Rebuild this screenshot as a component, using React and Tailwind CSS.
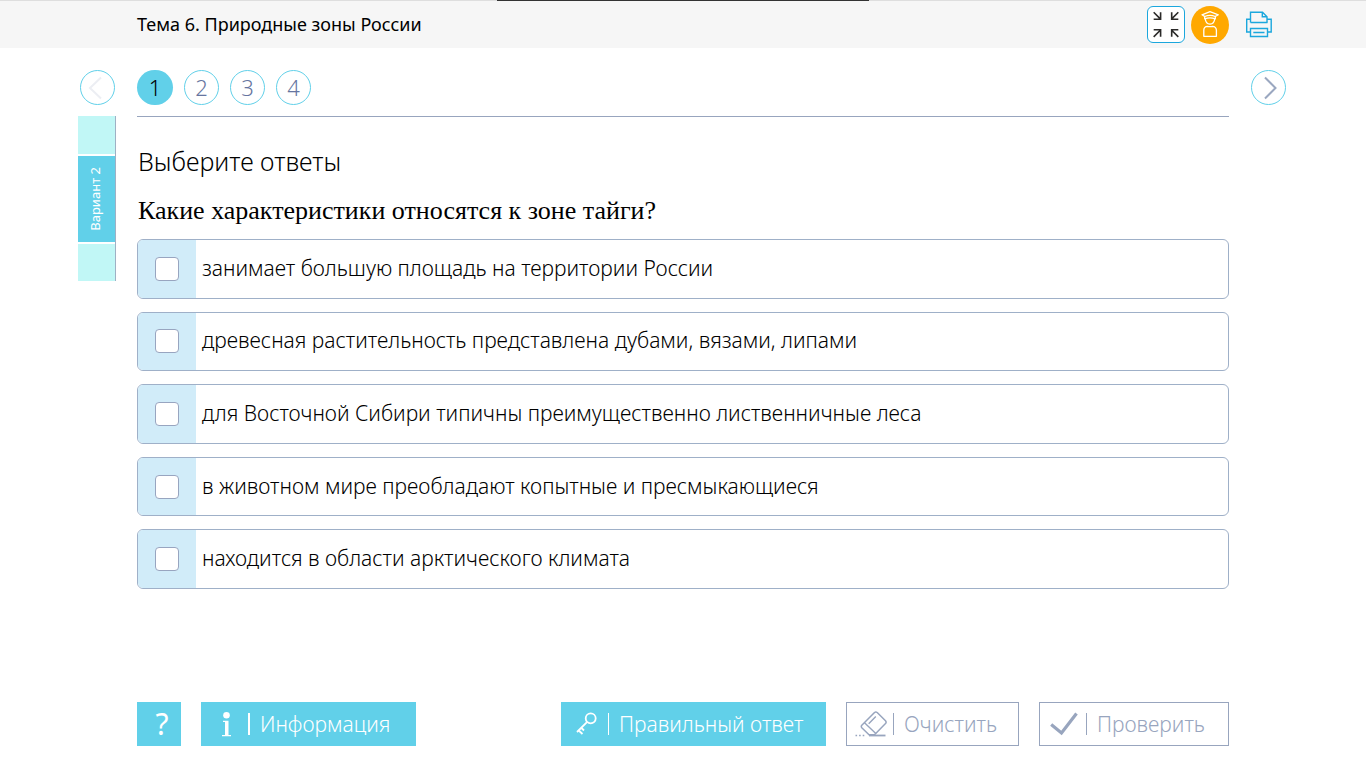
import React, { useState } from "react";

const answers = [
  "занимает большую площадь на территории России",
  "древесная растительность представлена дубами, вязами, липами",
  "для Восточной Сибири типичны преимущественно лиственничные леса",
  "в животном мире преобладают копытные и пресмыкающиеся",
  "находится в области арктического климата",
];

function CollapseIcon() {
  return (
    <svg viewBox="0 0 38 38" className="size-[38px]" fill="none" stroke="#2b2a29" strokeWidth="1.700" aria-hidden="true">
      <path d="M6 5.500L13 12.500M6 13H13.300V5.500" />
      <path d="M32 5.500L25 12.500M25 5.500V13H32" />
      <path d="M6 31.500L13 24.500M6 24H13.300V31.500" />
      <path d="M32 31.500L25 24.500M25 31.500V24H32" />
    </svg>
  );
}

function StudentIcon() {
  return (
    <svg viewBox="0 0 38 38" className="size-[38px]" fill="none" stroke="#fff" strokeWidth="1.300" strokeLinejoin="round" strokeLinecap="round" aria-hidden="true">
      <path d="M11 8.800L19 5.700L27.300 8.800L24.300 10.500Q19 8.300 13.700 10.500Z" />
      <path d="M13.700 10.500V12.800Q19 10.800 24.300 12.800V10.500" />
      <path d="M14.300 13Q14.800 18 19 18.200Q23.200 18 23.700 13" />
      <path d="M12.800 30.300V24Q13 20.500 16.500 20.300Q19 21 21.500 20.300Q25 20.500 25.400 24V30.300Z" />
    </svg>
  );
}

function PrinterIcon() {
  return (
    <svg viewBox="0 0 28 28" className="size-7" fill="none" stroke="#1ba7dd" strokeWidth="1.400" aria-hidden="true">
      <path d="M5.500 11.500V1.200H17.500L22 5.700V11.500M17.300 1.200V5.800H22" />
      <path d="M5.500 8.200H1.700V21H5.500M22 8.200H26.200V21H22.500" />
      <path d="M5.500 11.500H22.500M5.500 17.500H22.500V25.500H5.500ZM8.300 21.500H19.500" />
    </svg>
  );
}

function KeyIcon() {
  return (
    <svg viewBox="0 0 24 24" className="size-6" fill="none" stroke="#fff" strokeWidth="1.800" aria-hidden="true">
      <circle cx="15.700" cy="6.300" r="5" />
      <path d="M12.200 9.800L2 20M3.200 18L7.500 22M6 15.500L9 18.500" />
    </svg>
  );
}

function InfoIcon() {
  return (
    <svg viewBox="0 0 12 26" className="h-[26px] w-3" fill="#fff" aria-hidden="true">
      <circle cx="5.500" cy="4.300" r="3.300" />
      <path d="M2 9.700H7.500V24H10V25.300H1V24H4V11H2Z" />
    </svg>
  );
}

function EraserIcon() {
  return (
    <svg viewBox="0 0 32 28" className="h-7 w-8" fill="none" stroke="#98a5be" strokeWidth="1.500" strokeLinejoin="round" aria-hidden="true">
      <path d="M6.800 15.300L19.500 2.500Q20.800 1.500 22.200 2.500L30.500 10.800Q31.700 12.200 30.500 13.500L19.500 24.800H14L6.800 17.800Q5.800 16.500 6.800 15.300Z" />
      <path d="M9.500 12.700L20.800 23.500M13.700 13.800L20.800 6.500" strokeWidth="1.400" />
      <path d="M14 25.500H30.500" strokeWidth="1.800" />
      <path d="M0.500 25.500H10" strokeWidth="1.600" strokeDasharray="1.600 2" />
    </svg>
  );
}

function CheckIcon() {
  return (
    <svg viewBox="0 0 28 24" className="h-6 w-7" fill="none" stroke="#98a5be" strokeWidth="3.200" aria-hidden="true">
      <path d="M1.200 12.500L11.500 21L26.500 1.500" />
    </svg>
  );
}

function ArrowButton({ label, next }) {
  return (
    <button
      type="button"
      aria-label={label}
      disabled={!next}
      className="flex size-[35px] items-center justify-center rounded-full border border-[#61d0e9] bg-white"
    >
      <svg viewBox="0 0 24 24" className="size-6" fill="none" strokeWidth="2" aria-hidden="true">
        {next ? (
          <path d="M8 1.500L18.500 12L8 22.500" stroke="#9aa7c0" />
        ) : (
          <path d="M15 1.500L4 12L15 22.500" stroke="#eceef3" />
        )}
      </svg>
    </button>
  );
}

function Header() {
  return (
    <header className="relative flex h-12 items-center justify-between border-t border-[#dedede] bg-[#f6f6f6] pr-[93px] pl-[137px]">
      <div className="absolute -top-px left-1/2 h-px w-[372px] -translate-x-1/2 bg-[#333]" />
      <h1 className="pb-0.5 text-[18px] leading-6 font-normal">Тема 6. Природные зоны России</h1>
      <div className="flex items-center">
        <button type="button" aria-label="Свернуть" className="mr-1.5 flex h-[37px] w-[38px] items-center justify-center rounded-md border border-[#1ba7dd] bg-white">
          <CollapseIcon />
        </button>
        <button type="button" aria-label="Ученик" className="mr-4 size-[38px] rounded-full bg-[#ffa800]">
          <StudentIcon />
        </button>
        <button type="button" aria-label="Печать">
          <PrinterIcon />
        </button>
      </div>
    </header>
  );
}

function VariantRail() {
  return (
    <nav aria-label="Варианты" className="flex w-[38px] flex-col gap-0.5 border-r border-[#9fb0c4]">
      <button type="button" aria-label="Предыдущий вариант" className="h-[38px] bg-[#c1f7f6]" />
      <button type="button" className="flex h-[86px] items-center justify-center bg-[#61d0e9] pr-1 text-[13px] leading-4 text-white">
        <span className="rotate-180 [writing-mode:vertical-rl]">Вариант 2</span>
      </button>
      <button type="button" aria-label="Следующий вариант" className="h-[37px] bg-[#c1f7f6]" />
    </nav>
  );
}

export default function App() {
  const [page, setPage] = useState(1);
  return (
    <div className="flex min-h-screen flex-col bg-white font-['Noto_Sans','Open_Sans',sans-serif] text-black">
      <Header />
      <div className="grid grid-cols-[137px_1fr_137px] pt-[22px]">
        <div className="pl-20">
          <ArrowButton label="Назад" />
        </div>
        <nav aria-label="Задания" className="flex gap-[11px] pb-[11px]">
          {[1, 2, 3, 4].map((n) => (
            <button
              key={n}
              type="button"
              onClick={() => setPage(n)}
              className={
                n === page
                  ? "h-[35px] w-9 rounded-full bg-[#61d0e9] pb-0.5 text-[22px] leading-8 font-light text-black"
                  : "size-[35px] rounded-full border border-[#61d0e9] pb-0.5 text-[22px] leading-[30px] font-light text-[#6675a0]"
              }
            >
              {n}
            </button>
          ))}
        </nav>
        <div className="pl-[22px]">
          <ArrowButton label="Вперёд" next />
        </div>
      </div>
      <div className="grid grid-cols-[137px_1fr_137px]">
        <div className="pl-[78px]">
          <VariantRail />
        </div>
        <main className="border-t border-[#98a5be] pt-[26px]">
          <h2 className="pl-px text-[25px] leading-9 font-light">Выберите ответы</h2>
          <fieldset>
            <legend className="pt-[15px] pb-[11px] pl-px font-['Liberation_Serif',serif] text-[26px] leading-[34px]">
              Какие характеристики относятся к зоне тайги?
            </legend>
            <div className="grid min-h-[350px] auto-rows-fr gap-[13px]">
              {answers.map((text) => (
                <label key={text} className="flex overflow-hidden rounded-md border border-[#9fb0c8]">
                  <span className="flex w-[58px] items-center justify-center bg-[#d1ecf9]">
                    <input
                      type="checkbox"
                      className="size-6 appearance-none rounded border border-[#98a5c0] bg-white checked:bg-[#61d0e9]"
                    />
                  </span>
                  <span className="self-center pb-0.5 pl-1.5 text-[21px] leading-7 font-light">{text}</span>
                </label>
              ))}
            </div>
          </fieldset>
        </main>
      </div>
      <footer className="mt-auto flex justify-between px-[137px] pb-[22px] text-[21px] leading-7 font-light">
        <div className="flex gap-5">
          <button type="button" aria-label="Помощь" className="size-11 bg-[#61d0e9] pl-1.5 text-[30px] leading-10 font-normal text-white">
            ?
          </button>
          <button type="button" className="flex h-11 w-[215px] items-center bg-[#61d0e9] pl-5 text-white">
            <InfoIcon />
            <span className="mr-2.5 ml-[15px] h-[22px] w-0.5 bg-white" />
            Информация
          </button>
        </div>
        <div className="flex gap-5">
          <button type="button" className="flex h-11 w-[265px] items-center bg-[#61d0e9] pl-3.5 text-white">
            <KeyIcon />
            <span className="mr-2.5 ml-[9px] h-[22px] w-px bg-white" />
            Правильный ответ
          </button>
          <button type="button" className="flex h-11 w-[173px] items-center border border-[#98a5be] pl-2 text-[#98a5be]">
            <EraserIcon />
            <span className="mr-2.5 ml-1.5 h-[22px] w-px bg-[#98a5be]" />
            Очистить
          </button>
          <button type="button" className="flex h-11 w-[190px] items-center border border-[#98a5be] pl-2.5 text-[#98a5be]">
            <CheckIcon />
            <span className="mr-2.5 ml-2 h-[22px] w-px bg-[#98a5be]" />
            Проверить
          </button>
        </div>
      </footer>
    </div>
  );
}
